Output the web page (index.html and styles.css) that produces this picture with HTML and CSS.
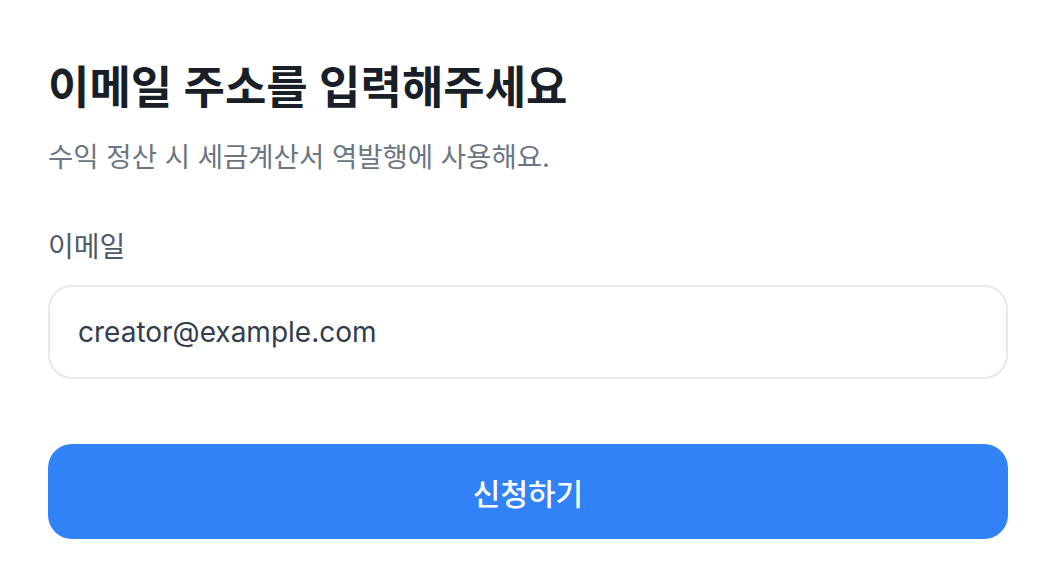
FILE: index.html
```html
<!DOCTYPE html>
<html lang="ko">
<head>
    <meta charset="UTF-8">
    <meta name="viewport" content="width=device-width, initial-scale=1.0">
    <title>이메일 입력</title>
    <link rel="stylesheet" href="styles.css">
</head>
<body>
    <div class="page">
        <!-- 헤더 -->
        <div class="header">
            <h1>이메일 주소를 입력해주세요</h1>
            <p class="desc">수익 정산 시 세금계산서 역발행에 사용해요.</p>
        </div>

        <!-- 입력 폼 -->
        <form class="email-form" onsubmit="event.preventDefault()">
            <label class="field-label" for="email">이메일</label>
            <input class="field-input" type="email" id="email" value="creator@example.com">
            <button class="submit-btn" type="submit">신청하기</button>
        </form>
    </div>
</body>
</html>
```

FILE: styles.css
```css
/* 기본 스타일 */
body {
    margin: 0;
    background-color: #fff;
    font-family: Inter, "Noto Sans CJK KR", sans-serif;
    color: #191f28;
}

.page {
    padding: 58px 48px 48px;
}

/* 헤더 */
.header h1 {
    margin: 0;
    font-size: 45px;
    font-weight: 600;
    line-height: 60px;
    color: #191f28;
}

.header .desc {
    margin: 19px 0 0;
    font-size: 27.5px;
    line-height: 40px;
    color: #6b7684;
}

/* 폼 */
.email-form {
    display: flex;
    flex-direction: column;
    margin-top: 50px;
}

.field-label {
    font-size: 28px;
    line-height: 40px;
    color: #4e5968;
}

.field-input {
    margin-top: 18px;
    height: 94px;
    box-sizing: border-box;
    padding: 0 28px;
    border: 2px solid #e5e8eb;
    border-radius: 24px;
    font-family: inherit;
    font-size: 28px;
    color: #333d4b;
    outline: none;
}

.submit-btn {
    margin-top: 65px;
    height: 95px;
    border: none;
    border-radius: 24px;
    background-color: #3182f6;
    color: #fff;
    font-family: inherit;
    font-size: 30px;
    font-weight: 500;
    cursor: pointer;
}
```
